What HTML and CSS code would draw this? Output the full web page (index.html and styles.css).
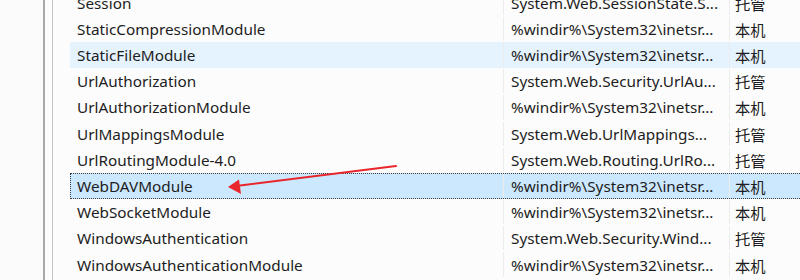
FILE: index.html
```html
<!DOCTYPE html>
<html lang="zh-CN">
<head>
<meta charset="utf-8">
<link rel="stylesheet" href="styles.css">
</head>
<body>
<div class="window">
  <div class="gutter"></div>
  <div class="strip"></div>
  <div class="list">
    <div class="row"><span class="c1">Session</span><span class="c2">System.Web.SessionState.S...</span><span class="c3">托管</span></div>
    <div class="row"><span class="c1">StaticCompressionModule</span><span class="c2">%windir%\System32\inetsr...</span><span class="c3">本机</span></div>
    <div class="row hover"><span class="c1">StaticFileModule</span><span class="c2">%windir%\System32\inetsr...</span><span class="c3">本机</span></div>
    <div class="row"><span class="c1">UrlAuthorization</span><span class="c2">System.Web.Security.UrlAu...</span><span class="c3">托管</span></div>
    <div class="row"><span class="c1">UrlAuthorizationModule</span><span class="c2">%windir%\System32\inetsr...</span><span class="c3">本机</span></div>
    <div class="row"><span class="c1">UrlMappingsModule</span><span class="c2">System.Web.UrlMappings...</span><span class="c3">托管</span></div>
    <div class="row"><span class="c1">UrlRoutingModule-4.0</span><span class="c2">System.Web.Routing.UrlRo...</span><span class="c3">托管</span></div>
    <div class="row selected"><span class="c1">WebDAVModule</span><span class="c2">%windir%\System32\inetsr...</span><span class="c3">本机</span></div>
    <div class="row"><span class="c1">WebSocketModule</span><span class="c2">%windir%\System32\inetsr...</span><span class="c3">本机</span></div>
    <div class="row"><span class="c1">WindowsAuthentication</span><span class="c2">System.Web.Security.Wind...</span><span class="c3">托管</span></div>
    <div class="row"><span class="c1">WindowsAuthenticationModule</span><span class="c2">%windir%\System32\inetsr...</span><span class="c3">本机</span></div>
  </div>
  <svg class="arrow" width="800" height="280" viewBox="0 0 800 280">
    <line x1="396" y1="166" x2="236" y2="186" stroke="#e8262b" stroke-width="2" stroke-linecap="round"/>
    <polygon points="228,187 239,179.5 241,194" fill="#e8262b"/>
  </svg>
</div>
</body>
</html>
```
FILE: styles.css
```css
html, body {
  margin: 0;
  padding: 0;
  background: #fbfbfb;
}
.window {
  position: relative;
  width: 800px;
  height: 280px;
  overflow: hidden;
  display: flex;
  font-family: "Noto Sans", "Noto Sans CJK SC", sans-serif;
  font-size: 15.3px;
  color: #1c1c22;
}
.gutter {
  width: 43px;
  flex: none;
  border-right: 2px solid #a9a9a9;
  background: #fbfbfb;
}
.strip {
  width: 7px;
  flex: none;
  border-right: 1px solid #c4c4c4;
  background: #fdfdfd;
}
.list {
  flex: 1;
  padding-left: 17px;
  margin-top: -10.4px;
  background: #fcfcfc;
}
.row {
  height: 26.2px;
  box-sizing: border-box;
  display: grid;
  grid-template-columns: 432px 226px 1fr;
  align-items: center;
  white-space: nowrap;
  border: 1px solid transparent;
  border-right: none;
}
.row span {
  align-self: stretch;
  display: flex;
  align-items: center;
  overflow: hidden;
}
.c1 { padding-left: 6px; }
.c2 { padding-left: 7px; border-left: 1px solid #ececec; }
.c3 { padding-left: 5px; border-left: 1px solid #ececec; }
.hover { background: #e5f3ff; }
.selected {
  background: #cce8ff;
  border: 1px dotted #3a3a3a;
  border-right: none;
}
.arrow {
  position: absolute;
  left: 0;
  top: 0;
}
```
